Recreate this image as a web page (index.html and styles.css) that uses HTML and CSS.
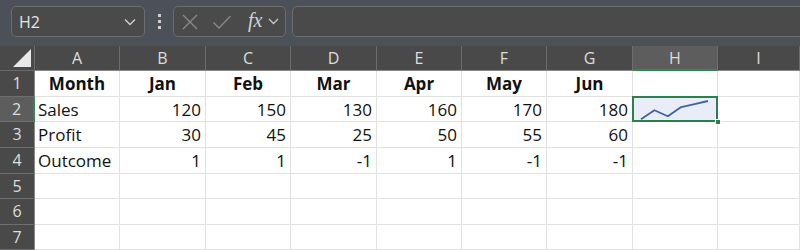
FILE: index.html
```html
<!DOCTYPE html>
<html lang="en">
<head>
    <meta charset="UTF-8">
    <meta name="viewport" content="width=device-width, initial-scale=1.0">
    <title>Sheet1</title>
    <link rel="stylesheet" href="styles.css">
</head>
<body>
    <div class="toolbar">
        <div class="name-box">
            <span class="name-text">H2</span>
            <svg class="chevron" width="12" height="8" viewBox="0 0 12 8"><path d="M1 1.5 L6 6.5 L11 1.5" fill="none" stroke="#d0d0d0" stroke-width="1.4"/></svg>
        </div>
        <div class="dots">
            <span></span><span></span><span></span>
        </div>
        <div class="fx-box">
            <svg class="icon" width="18" height="18" viewBox="0 0 18 18"><path d="M2 2 L16 16 M16 2 L2 16" stroke="#8a8a8a" stroke-width="1.3" fill="none"/></svg>
            <svg class="icon" width="20" height="18" viewBox="0 0 20 18"><path d="M1.5 9.5 L7 15 L18.5 3" stroke="#8a8a8a" stroke-width="1.3" fill="none"/></svg>
            <span class="fx">fx</span>
            <svg class="chevron small" width="11" height="7" viewBox="0 0 11 7"><path d="M1 1 L5.5 5.5 L10 1" fill="none" stroke="#c8c8c8" stroke-width="1.3"/></svg>
        </div>
        <div class="formula-box"></div>
    </div>

    <div class="sheet">
        <div class="corner"><span class="triangle"></span></div>
        <div class="col-head">A</div>
        <div class="col-head">B</div>
        <div class="col-head">C</div>
        <div class="col-head">D</div>
        <div class="col-head">E</div>
        <div class="col-head">F</div>
        <div class="col-head">G</div>
        <div class="col-head active">H</div>
        <div class="col-head">I</div>

        <div class="row-head">1</div>
        <div class="cell head">Month</div>
        <div class="cell head">Jan</div>
        <div class="cell head">Feb</div>
        <div class="cell head">Mar</div>
        <div class="cell head">Apr</div>
        <div class="cell head">May</div>
        <div class="cell head">Jun</div>
        <div class="cell"></div>
        <div class="cell"></div>

        <div class="row-head active">2</div>
        <div class="cell">Sales</div>
        <div class="cell num">120</div>
        <div class="cell num">150</div>
        <div class="cell num">130</div>
        <div class="cell num">160</div>
        <div class="cell num">170</div>
        <div class="cell num">180</div>
        <div class="cell selected">
            <svg class="sparkline" width="85" height="25" viewBox="0 0 85 25">
                <polyline points="8,22.3 21.4,13.2 34.8,19.2 48.2,10.1 61.6,7.1 75,4" fill="none" stroke="#3f62a0" stroke-width="1.8" stroke-linejoin="round"/>
            </svg>
            <span class="fill-handle"></span>
        </div>
        <div class="cell"></div>

        <div class="row-head">3</div>
        <div class="cell">Profit</div>
        <div class="cell num">30</div>
        <div class="cell num">45</div>
        <div class="cell num">25</div>
        <div class="cell num">50</div>
        <div class="cell num">55</div>
        <div class="cell num">60</div>
        <div class="cell"></div>
        <div class="cell"></div>

        <div class="row-head">4</div>
        <div class="cell">Outcome</div>
        <div class="cell num">1</div>
        <div class="cell num">1</div>
        <div class="cell num">-1</div>
        <div class="cell num">1</div>
        <div class="cell num">-1</div>
        <div class="cell num">-1</div>
        <div class="cell"></div>
        <div class="cell"></div>

        <div class="row-head">5</div>
        <div class="cell"></div><div class="cell"></div><div class="cell"></div><div class="cell"></div>
        <div class="cell"></div><div class="cell"></div><div class="cell"></div><div class="cell"></div><div class="cell"></div>

        <div class="row-head">6</div>
        <div class="cell"></div><div class="cell"></div><div class="cell"></div><div class="cell"></div>
        <div class="cell"></div><div class="cell"></div><div class="cell"></div><div class="cell"></div><div class="cell"></div>

        <div class="row-head">7</div>
        <div class="cell"></div><div class="cell"></div><div class="cell"></div><div class="cell"></div>
        <div class="cell"></div><div class="cell"></div><div class="cell"></div><div class="cell"></div><div class="cell"></div>
    </div>
</body>
</html>
```

FILE: styles.css
```css
* {
    margin: 0;
    padding: 0;
    box-sizing: border-box;
}

body {
    width: 800px;
    height: 250px;
    overflow: hidden;
    font-family: "Open Sans", "Liberation Sans", sans-serif;
    background: #4c5059;
    color: #000;
}

/* formula bar */
.toolbar {
    height: 46px;
    display: flex;
    align-items: flex-start;
    padding: 6px 0 0 11px;
    background: #4c5059;
}

.name-box {
    width: 134px;
    height: 31px;
    border: 1px solid #6c6c6c;
    border-radius: 5px;
    background: #4a4a4a;
    display: flex;
    align-items: center;
    justify-content: space-between;
    padding: 0 8px 0 7px;
}

.name-text {
    color: #e6e6e6;
    font-size: 16px;
}

.dots {
    width: 28px;
    display: flex;
    flex-direction: column;
    align-items: center;
    gap: 3px;
    padding-top: 8px;
}

.dots span {
    width: 3px;
    height: 3px;
    background: #d0d0d0;
}

.fx-box {
    width: 113px;
    height: 31px;
    border: 1px solid #6c6c6c;
    border-radius: 5px;
    background: #4a4a4a;
    display: flex;
    align-items: center;
    padding: 0 4px 0 7px;
}

.fx-box .icon {
    margin-right: 13px;
}

.fx-box .icon + .icon {
    margin-right: 16px;
}

.fx {
    font-family: "Liberation Serif", serif;
    font-style: italic;
    font-size: 20px;
    color: #d4d4d4;
    margin-right: 6px;
    line-height: 1;
    padding-bottom: 3px;
}

.formula-box {
    flex: 1;
    height: 31px;
    margin-left: 6px;
    margin-right: -10px;
    border: 1px solid #6c6c6c;
    border-radius: 5px;
    background: #4a4a4a;
}

/* grid */
.sheet {
    display: grid;
    grid-template-columns: 35px 85px 86px 85px 86px 85px 85px 86px 85px 1fr;
    grid-template-rows: 25px 26px 25px 26px 26px 25px 26px 25px;
    background: #fff;
}

.corner {
    background: #494949;
    border-right: 1px solid #6a6a6a;
    border-bottom: 1px solid #6a6a6a;
    position: relative;
}

.triangle {
    position: absolute;
    right: 3px;
    bottom: 3px;
    width: 0;
    height: 0;
    border-left: 18px solid transparent;
    border-bottom: 18px solid #e8e8e8;
}

.col-head {
    background: #494949;
    color: #dedede;
    font-size: 16px;
    text-align: center;
    line-height: 24px;
    border-right: 1px solid #6e6e6e;
    border-bottom: 1px solid #8a8a8a;
}

.col-head.active {
    background: #5d5d5d;
    border-bottom: 2px solid #2f8a52;
}

.row-head {
    background: #494949;
    color: #dedede;
    font-size: 16px;
    text-align: center;
    line-height: 25px;
    border-right: 1px solid #8a8a8a;
    border-bottom: 1px solid #6e6e6e;
}

.row-head.active {
    background: #5d5d5d;
    border-right: 2px solid #2f8a52;
}

.cell {
    background: #fff;
    border-right: 1px solid #e1e1e1;
    border-bottom: 1px solid #e1e1e1;
    font-size: 17px;
    line-height: 26px;
    padding: 0 3px;
    white-space: nowrap;
    overflow: hidden;
    color: #111;
}

.cell.head {
    font-weight: 700;
    text-align: center;
}

.cell.num {
    text-align: right;
    padding-right: 4px;
}

.cell.selected {
    position: relative;
    overflow: visible;
    background: #e8edf7;
    padding: 0;
}

.cell.selected::after {
    content: "";
    position: absolute;
    left: -1px;
    top: -1px;
    right: -1px;
    bottom: -1px;
    border: 2px solid #2f7d4f;
}

.sparkline {
    display: block;
    position: absolute;
    left: 0;
    top: 0;
}

.fill-handle {
    position: absolute;
    right: -4px;
    bottom: -4px;
    width: 6px;
    height: 6px;
    background: #2f7d4f;
    border: 1px solid #fff;
    z-index: 2;
}
```
